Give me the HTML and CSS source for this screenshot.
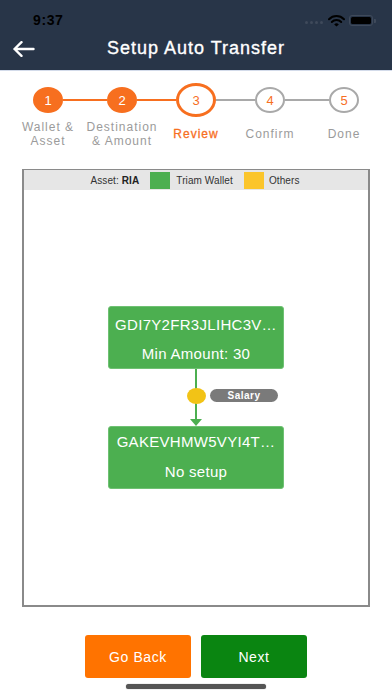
FILE: index.html
```html
<!DOCTYPE html>
<html>
<head>
<meta charset="utf-8">
<link rel="stylesheet" href="styles.css">
</head>
<body>
<div class="screen">
  <header class="header">
    <div class="status">
      <span class="time">9:37</span>
      <div class="status-icons">
        <span class="dots"><i></i><i></i><i></i><i></i></span>
        <svg class="wifi" width="17" height="12" viewBox="0 0 17 12">
          <path d="M1 4.2 A10.5 10.5 0 0 1 16 4.2" fill="none" stroke="#000" stroke-width="2" stroke-linecap="round"/>
          <path d="M3.8 7 A6.5 6.5 0 0 1 13.2 7" fill="none" stroke="#000" stroke-width="2" stroke-linecap="round"/>
          <path d="M6.2 9.4 L8.5 11.6 L10.8 9.4 A3.3 3.3 0 0 0 6.2 9.4 Z" fill="#000"/>
        </svg>
        <span class="battery"><span class="battery-fill"></span></span>
        <span class="battery-nub"></span>
      </div>
    </div>
    <div class="nav">
      <svg class="back" width="23" height="16" viewBox="0 0 23 16">
        <path d="M21.5 8 H2.5 M9.5 1.2 L2.5 8 L9.5 14.8" fill="none" stroke="#fff" stroke-width="2.4" stroke-linecap="round" stroke-linejoin="round"/>
      </svg>
      <div class="title">Setup Auto Transfer</div>
      <div></div>
    </div>
  </header>

  <section class="stepper">
    <div class="track">
      <div class="circle done">1</div>
      <div class="line active w44"></div>
      <div class="circle done">2</div>
      <div class="line active w39"></div>
      <div class="circle current">3</div>
      <div class="line w39"></div>
      <div class="circle todo">4</div>
      <div class="line w44"></div>
      <div class="circle todo">5</div>
    </div>
    <div class="labels">
      <div class="label"><div>Wallet &amp;</div><div>Asset</div></div>
      <div class="label"><div>Destination</div><div>&amp; Amount</div></div>
      <div class="label current">Review</div>
      <div class="label">Confirm</div>
      <div class="label">Done</div>
    </div>
  </section>

  <section class="board">
    <div class="legend">
      <span class="legend-text">Asset: <b>RIA</b></span>
      <span class="swatch green"></span>
      <span class="legend-text">Triam Wallet</span>
      <span class="swatch yellow"></span>
      <span class="legend-text">Others</span>
    </div>
    <div class="diagram">
      <div class="node first">
        <div class="node-line">GDI7Y2FR3JLIHC3V…</div>
        <div class="node-line">Min Amount: 30</div>
      </div>
      <div class="edge">
        <div class="edge-line"></div>
        <div class="edge-head"></div>
        <span class="edge-dot"></span>
        <span class="edge-label">Salary</span>
      </div>
      <div class="node second">
        <div class="node-line">GAKEVHMW5VYI4T…</div>
        <div class="node-line">No setup</div>
      </div>
    </div>
  </section>

  <div class="actions">
    <button class="btn back-btn">Go Back</button>
    <button class="btn next-btn">Next</button>
  </div>
  <div class="home-indicator"></div>
</div>
</body>
</html>
```

FILE: styles.css
```css
* { box-sizing: border-box; }

html, body {
  margin: 0;
  padding: 0;
  background: #fff;
}

body {
  width: 392px;
  height: 696px;
  overflow: hidden;
  font-family: "Liberation Sans", Arial, sans-serif;
}

.screen {
  width: 392px;
  height: 696px;
  display: flex;
  flex-direction: column;
}

/* Header */
.header {
  height: 71px;
  background: #283548;
  border-bottom: 1px solid #d3dbea;
  padding-bottom: 5px;
  display: flex;
  flex-direction: column;
}

.status {
  height: 32px;
  padding: 8px 16px 0 33px;
  display: flex;
  align-items: center;
  justify-content: space-between;
}

.time {
  color: #000;
  font-size: 14px;
  font-weight: bold;
  letter-spacing: 0.6px;
}

.status-icons {
  display: flex;
  align-items: center;
  margin-top: 1px;
}

.dots {
  display: flex;
  gap: 2px;
  margin-right: 5px;
  margin-top: 4px;
}

.dots i {
  width: 3px;
  height: 3px;
  border-radius: 50%;
  background: #3f4a5b;
}

.wifi { margin-right: 4px; }

.battery {
  width: 24px;
  height: 11px;
  border: 1px solid #3f4a5b;
  border-radius: 3px;
  padding: 1px;
  display: flex;
}

.battery-fill {
  flex: 1;
  background: #000;
  border-radius: 1.5px;
}

.battery-nub {
  width: 2px;
  height: 4px;
  background: #3f4a5b;
  border-radius: 0 1px 1px 0;
  margin-left: 1px;
}

.nav {
  height: 33px;
  display: grid;
  grid-template-columns: 60px 1fr 60px;
  align-items: center;
  padding-left: 12px;
}

.back { display: block; }

.title {
  color: #fff;
  font-size: 18px;
  letter-spacing: 1px;
  text-align: center;
  -webkit-text-stroke: 0.35px #fff;
  margin-left: -12px;
}

/* Stepper */
.stepper {
  padding-top: 12px;
}

.track {
  height: 34px;
  display: flex;
  align-items: center;
  padding-left: 33px;
}

.circle {
  width: 30px;
  height: 26px;
  border-radius: 50%;
  display: flex;
  align-items: center;
  justify-content: center;
  font-size: 13px;
  flex: none;
}

.circle.done {
  background: #f76f1f;
  color: #fff;
}

.circle.current {
  width: 40px;
  height: 34px;
  border: 3px solid #f76f1f;
  color: #f76f1f;
  background: #fff;
}

.circle.todo {
  border: 2.5px solid #a9a9a9;
  color: #f76f1f;
  background: #fff;
}

.line {
  height: 2px;
  background: #a9a9a9;
  flex: none;
}

.line.active { background: #f76f1f; }
.w44 { width: 44px; }
.w39 { width: 39px; }

.labels {
  margin-top: 3px;
  height: 28px;
  padding-left: 11px;
  display: grid;
  grid-template-columns: repeat(5, 74px);
  align-items: center;
}

.label {
  text-align: center;
  font-size: 12px;
  line-height: 14px;
  letter-spacing: 1px;
  color: #9b9b9b;
  white-space: nowrap;
}

.label.current {
  color: #f76f1f;
  -webkit-text-stroke: 0.3px #f76f1f;
}

/* Board */
.board {
  margin: 21px 0 0 22px;
  width: 348px;
  height: 438px;
  border: 2px solid #8a8a8a;
  border-top-width: 1px;
  display: flex;
  flex-direction: column;
}

.legend {
  height: 20px;
  background: #e6e6e6;
  display: flex;
  align-items: center;
  justify-content: center;
  padding-right: 2px;
  font-size: 10px;
  letter-spacing: 0.1px;
  color: #333;
}

.legend-text b { color: #222; }

.swatch {
  width: 20px;
  height: 17px;
  margin: 0 6px 0 11px;
}

.swatch.yellow { margin-right: 5px; }
.swatch.green { background: #4caf50; }
.swatch.yellow { background: #fbc52b; }

.diagram {
  padding-top: 116px;
  display: flex;
  flex-direction: column;
  align-items: center;
}

.node {
  width: 176px;
  height: 63px;
  background: #4caf50;
  border: 1px solid #6fc173;
  border-radius: 3px;
  color: #fff;
  text-align: center;
  font-size: 15px;
  letter-spacing: 0.3px;
}

.node.first { padding-top: 3px; }
.node.second { padding-top: 0; }
.node.second .node-line { line-height: 30px; }

.node-line {
  line-height: 29px;
  white-space: nowrap;
}

.edge {
  position: relative;
  width: 12px;
  height: 57px;
  display: flex;
  flex-direction: column;
  align-items: center;
}

.edge-line {
  width: 2px;
  height: 50px;
  background: #4caf50;
}

.edge-head {
  width: 0;
  height: 0;
  border-left: 6px solid transparent;
  border-right: 6px solid transparent;
  border-top: 7px solid #4caf50;
}

.edge-dot {
  position: absolute;
  left: -3.5px;
  top: 19px;
  width: 19px;
  height: 16px;
  border-radius: 50%;
  background: #f2c316;
}

.edge-label {
  position: absolute;
  left: 20px;
  top: 20px;
  width: 68px;
  height: 13px;
  border-radius: 7px;
  background: #7a7a7a;
  color: #fff;
  font-size: 10px;
  font-weight: bold;
  letter-spacing: 0.5px;
  line-height: 13px;
  text-align: center;
}

/* Actions */
.actions {
  margin-top: 28px;
  display: flex;
  justify-content: center;
  gap: 10px;
}

.btn {
  width: 106px;
  height: 43px;
  border: none;
  border-radius: 3px;
  color: #fff;
  font-family: "Liberation Sans", Arial, sans-serif;
  font-size: 14px;
  letter-spacing: 0.6px;
  padding: 0;
}

.back-btn { background: #ff7300; }
.next-btn { background: #0a8511; }

.home-indicator {
  margin: 6px auto 0;
  width: 140px;
  height: 5px;
  border-radius: 3px;
  background: #555;
  box-shadow: 0 0 1px #777;
}
```
